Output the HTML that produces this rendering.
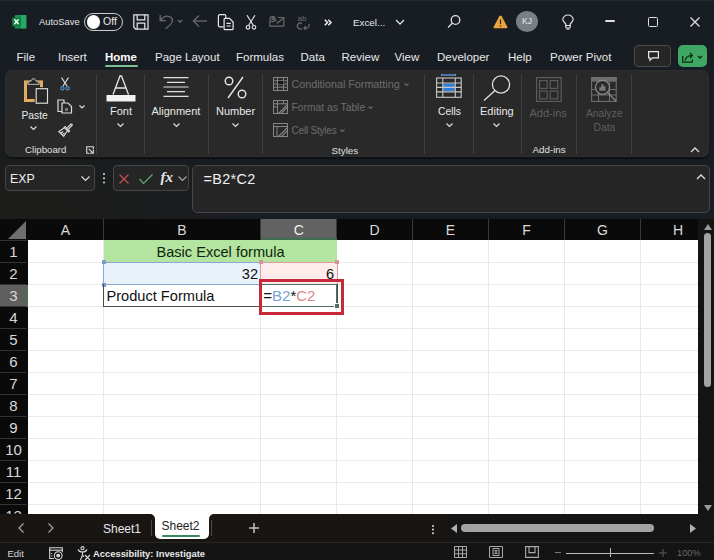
<!DOCTYPE html>
<html><head><meta charset="utf-8">
<style>
*{margin:0;padding:0;box-sizing:border-box}
html,body{width:714px;height:560px;overflow:hidden;background:#181d23;font-family:"Liberation Sans",sans-serif;color:#e6e6e6}
.a{position:absolute;white-space:nowrap}
.t{font-size:11.5px;line-height:14px;color:#e8e8e8}
.rb{font-size:11px;line-height:13px;color:#e8e8e8}
.dim{color:#6d6d6d}
svg{position:absolute;overflow:visible}
.sep{position:absolute;width:1px;background:#3f3f3f;top:74px;height:80px}
.hdr{position:absolute;top:220px;height:20px;background:#0a0a0a;color:#dcdcdc;font-size:14px;line-height:20px;text-align:center}
.rh{position:absolute;left:0;width:27px;height:21px;background:#0a0a0a;color:#d8d8d8;font-size:15px;line-height:22px;text-align:center}
</style></head><body>
<!-- title bar -->
<div class="a" style="left:0;top:0;width:714px;height:219px;background:#181d23;border-top:1px solid #25292e"></div>
<div class="a" style="left:0;top:0;width:714px;height:219px;background:radial-gradient(ellipse 260px 110px at 0px 219px,#1d1e1b 0%,rgba(29,30,27,0.85) 40%,rgba(29,30,27,0) 100%)"></div>
<!-- excel icon -->
<svg style="left:12px;top:14.5px" width="15" height="14" viewBox="0 0 15 14">
 <rect x="2.8" y="0" width="11.5" height="13.5" rx="1" fill="#1b9055"/>
 <rect x="9" y="0" width="5.3" height="13.5" rx="0.8" fill="#28a866"/>
 <rect x="0" y="2.5" width="9" height="9" rx="1" fill="#107a42"/>
 <path d="M2.3 4.3l4.3 5M6.6 4.3l-4.3 5" stroke="#e8fff0" stroke-width="1.5"/>
</svg>
<div class="a" style="left:39px;top:15px;font-size:9.4px;line-height:13px;color:#e4e4e4">AutoSave</div>
<div class="a" style="left:84px;top:12.5px;width:39px;height:18.5px;border:1.7px solid #cdcdcd;border-radius:10px;background:#181d23"></div>
<div class="a" style="left:86.5px;top:15px;width:13.5px;height:13.5px;border-radius:50%;background:#fff"></div>
<div class="a" style="left:103px;top:15px;font-size:10.5px;line-height:13px;color:#e8e8e8">Off</div>
<!-- save -->
<svg style="left:133px;top:14px" width="16" height="16" viewBox="0 0 16 16" fill="none" stroke="#e4e4e4" stroke-width="1.25">
 <path d="M0.8 0.8h14.2v14.2H2.6L0.8 13.2z"/><path d="M4.2 0.8v5h7.6v-5"/><path d="M4.2 15V9h7.6v6"/>
</svg>
<!-- undo -->
<svg style="left:159px;top:14px" width="25" height="16" viewBox="0 0 25 16" fill="none" stroke="#6e6e6e" stroke-width="1.25">
 <path d="M1.2 1v5.5h5.5"/><path d="M1.5 6.3C4 2.2 9 0.8 12 3.5c2.6 2.4 1.8 6.2-5.5 11.2"/><path d="M19 6l2.2 2.2L23.4 6"/>
</svg>
<!-- back arrow -->
<svg style="left:192px;top:14px" width="16" height="14" viewBox="0 0 16 14" fill="none" stroke="#6a6a6a" stroke-width="1.3">
 <path d="M15 7H1.5"/><path d="M7 1.5L1.5 7 7 12.5"/>
</svg>
<!-- copy -->
<svg style="left:217px;top:13.5px" width="18" height="16" viewBox="0 0 18 16" fill="none" stroke="#e8e8e8" stroke-width="1.2">
 <path d="M6.5 12.8H2.6a1.2 1.2 0 0 1-1.2-1.2V1.9A1.2 1.2 0 0 1 2.6 0.7h5a1.2 1.2 0 0 1 1.2 1.2V4"/>
 <path d="M8 4.3h4.5l3.6 3.8v6.7a0.9 0.9 0 0 1-0.9 0.9H8a0.9 0.9 0 0 1-0.9-0.9V5.2A0.9 0.9 0 0 1 8 4.3z"/><path d="M9.5 9.3h4.3M9.5 12h4.3"/>
</svg>
<!-- scissors -->
<svg style="left:245px;top:14.5px" width="12" height="15" viewBox="0 0 12 15" fill="none" stroke="#e8e8e8" stroke-width="1.15">
 <path d="M2 0.3L8.3 10.2M10 0.3L3.7 10.2"/><circle cx="3" cy="12.3" r="1.8"/><circle cx="9" cy="12.3" r="1.8"/>
</svg>
<!-- mail -->
<svg style="left:269px;top:14.5px" width="16" height="12" viewBox="0 0 16 12" fill="none" stroke="#6a6a6a" stroke-width="1.2">
 <path d="M0.8 6v5.2h14V2.5H9"/><path d="M8 8.5L14.5 3"/><path d="M5.8 5.2A2.6 2.6 0 1 1 6 3.3V5.5a1 1 0 0 0 1.6 0"/><circle cx="4" cy="3.5" r="1"/>
</svg>
<!-- abc -->
<svg style="left:296px;top:14px" width="15" height="16" viewBox="0 0 15 16">
 <text x="1.5" y="7" font-size="8" font-family="Liberation Sans" fill="#707070">ab</text>
 <path d="M6 9.5a3 3 0 1 0 0 5" fill="none" stroke="#707070" stroke-width="1.1"/>
 <path d="M13 10v1.5a2.5 2.5 0 0 1-2.5 2.5H8M9.8 12.2L8 14l1.8 1.8" fill="none" stroke="#707070" stroke-width="1.1"/>
</svg>
<svg style="left:323.5px;top:19px" width="8" height="7" viewBox="0 0 8 7" fill="none" stroke="#f0f0f0" stroke-width="1.5"><path d="M0.8 0.8L3.5 3.5 0.8 6.2M4.3 0.8L7 3.5 4.3 6.2"/></svg>
<div class="a" style="left:353px;top:16px;font-size:9.8px;line-height:13px;color:#e8e8e8">Excel...</div>
<svg style="left:395px;top:19px" width="10" height="6" viewBox="0 0 10 6" fill="none" stroke="#e0e0e0" stroke-width="1.3"><path d="M1 1l4 4 4-4"/></svg>
<!-- search -->
<svg style="left:447px;top:15px" width="14" height="13" viewBox="0 0 14 13" fill="none" stroke="#e0e0e0" stroke-width="1.3">
 <circle cx="8.5" cy="5" r="4.3"/><path d="M5.5 8L1 12.5"/>
</svg>
<!-- warning -->
<svg style="left:493px;top:14.5px" width="15" height="14" viewBox="0 0 15 14">
 <path d="M6.3 1.3Q7.5 -0.5 8.7 1.3L14.3 11.8Q15 13.3 13.4 13.3H1.6Q0 13.3 0.7 11.8z" fill="#eba53f"/><path d="M7.5 4.5v4.5" stroke="#3a2a10" stroke-width="1.3"/><circle cx="7.5" cy="11" r="0.75" fill="#3a2a10"/>
</svg>
<div class="a" style="left:516px;top:11.3px;width:22px;height:21px;border-radius:50%;background:#798084;color:#e8e8e8;font-size:8.5px;line-height:21px;text-align:center">KJ</div>
<!-- bulb -->
<svg style="left:562px;top:14.5px" width="12" height="15" viewBox="0 0 12 15" fill="none" stroke="#e0e0e0" stroke-width="1.2">
 <path d="M3.8 10.5V9.5C3.8 8 0.8 6.8 0.8 4.6a5.2 4.6 0 0 1 10.4 0c0 2.2-3 3.4-3 4.9v1z"/><path d="M3.8 10.5h4.4v1.5a1 1 0 0 1-1 1H4.8a1 1 0 0 1-1-1z"/><path d="M4.5 14h3"/>
</svg>
<div class="a" style="left:605px;top:20.2px;width:9.5px;height:1.7px;background:#e0e0e0;border-radius:1px"></div>
<div class="a" style="left:648px;top:17px;width:9.5px;height:9.5px;border:1.3px solid #e0e0e0;border-radius:1.5px"></div>
<svg style="left:690px;top:17px" width="10" height="10" viewBox="0 0 10 10" fill="none" stroke="#e0e0e0" stroke-width="1.3"><path d="M0.5 0.5l9 9M9.5 0.5l-9 9"/></svg>

<!-- tabs -->
<div class="a t" style="left:16.5px;top:50px">File</div>
<div class="a t" style="left:58px;top:50px">Insert</div>
<div class="a t" style="left:105px;top:50px;font-weight:bold;color:#fff">Home</div>
<div class="a" style="left:105px;top:64.5px;width:33px;height:2px;background:#7dbd92;border-radius:1px"></div>
<div class="a t" style="left:155px;top:50px">Page Layout</div>
<div class="a t" style="left:236px;top:50px">Formulas</div>
<div class="a t" style="left:300.5px;top:50px">Data</div>
<div class="a t" style="left:341.5px;top:50px">Review</div>
<div class="a t" style="left:394.5px;top:50px">View</div>
<div class="a t" style="left:437px;top:50px">Developer</div>
<div class="a t" style="left:508px;top:50px">Help</div>
<div class="a t" style="left:550px;top:50px">Power Pivot</div>
<div class="a" style="left:634px;top:45px;width:37px;height:22px;border:1px solid #4a4a4a;border-radius:4px;background:#262626"></div>
<svg style="left:647.5px;top:51px" width="11" height="10" viewBox="0 0 11 10" fill="none" stroke="#e8e8e8" stroke-width="1.2"><path d="M0.6 0.6h9.8v6.2H4.5L2 9.3V6.8H0.6z"/></svg>
<div class="a" style="left:677.5px;top:45px;width:29px;height:22px;border-radius:5px;background:#3fa763"></div>
<svg style="left:681.5px;top:50.5px" width="21" height="12" viewBox="0 0 21 12" fill="none" stroke="#0c2a15" stroke-width="1.25"><path d="M0.7 5v6h9.6V8.5"/><path d="M3.2 9.5C3.6 6.2 6 4.5 10 4.5"/><path d="M8 2l2.4 2.5L8 7"/><path d="M16 5l2 2 2-2"/></svg>

<!-- ribbon -->
<div class="a" style="left:5px;top:70px;width:704px;height:87px;background:#292929;border-radius:7px;box-shadow:inset 0 0 0 1px #2e2e2e,0 1.5px 1.5px rgba(0,0,0,0.45)"></div>
<!-- paste -->
<svg style="left:22px;top:76px" width="28" height="30" viewBox="0 0 28 30">
 <rect x="3.5" y="5.9" width="16" height="18.6" fill="none" stroke="#e2ac5e" stroke-width="3"/>
 <path d="M6.2 8.3V6.2Q8.5 5.8 9.6 4.2Q11.5 1.2 13.4 4.2Q14.5 5.8 16.8 6.2V8.3z" fill="#222" stroke="#a0a0a0" stroke-width="1.2"/>
 <rect x="14.2" y="12.7" width="11.3" height="14.5" fill="#262626" stroke="#222" stroke-width="3"/>
 <rect x="14.2" y="12.7" width="11.3" height="14.5" fill="none" stroke="#dcdcdc" stroke-width="1.2"/>
</svg>
<div class="a rb" style="left:21.5px;top:108.5px;font-size:10.3px">Paste</div>
<svg style="left:30px;top:126px" width="7" height="4" viewBox="0 0 7 4" fill="none" stroke="#ddd" stroke-width="1.2"><path d="M0.5 0.5l3 3 3-3"/></svg>
<svg style="left:60px;top:77px" width="10" height="14" viewBox="0 0 10 14" fill="none" stroke-width="1.2">
 <path d="M1.5 0.5L7 9M8.5 0.5L3 9" stroke="#dcdcdc"/><circle cx="2.4" cy="11.2" r="1.6" stroke="#4f8fcc"/><circle cx="7.6" cy="11.2" r="1.6" stroke="#4f8fcc"/>
</svg>
<svg style="left:57px;top:99px" width="16" height="15" viewBox="0 0 16 15" fill="none" stroke="#dcdcdc" stroke-width="1.2">
 <path d="M5 12.5H1V1h6v3"/><path d="M5 4h6l3.5 3.5V14H5z"/><rect x="8" y="9" width="3" height="3" fill="#777" stroke="none"/>
</svg>
<svg style="left:78.5px;top:105px" width="6" height="4" viewBox="0 0 6 4" fill="none" stroke="#ddd" stroke-width="1.2"><path d="M0.5 0.5l2.5 2.5 2.5-2.5"/></svg>
<svg style="left:58px;top:122px" width="15" height="15" viewBox="0 0 15 15" fill="none" stroke="#dcdcdc" stroke-width="1.15">
 <path d="M9.3 5.7L13 2a1 1 0 0 1 1.2 1.2L10.5 7"/><path d="M7.2 4.6l4.4 4.4-1 1L6.2 5.6z"/><path d="M6.4 5.8L0.8 9.5 5.7 14.4 9.4 8.8"/><path d="M2.6 11.3l2.5-1.8M4.2 12.9l2.3-2"/>
</svg>
<div class="a" style="left:25px;top:142.5px;font-size:9.7px;line-height:13px;color:#e0e0e0">Clipboard</div>
<svg style="left:85.5px;top:146px" width="8" height="8" viewBox="0 0 8 8" fill="none" stroke="#ddd" stroke-width="1.1"><path d="M7.3 3.5V0.7H0.7v6.6h2.8"/><path d="M2.8 2.8l4.3 4.3M7.3 4v3.3H4"/></svg>
<div class="sep" style="left:96px"></div>
<!-- font -->
<svg style="left:106px;top:75px" width="30" height="27" viewBox="0 0 30 27">
 <path d="M7 19.5L14 1h1.5l7 18.5M9.5 13h10" fill="none" stroke="#e6e6e6" stroke-width="1.3"/>
 <rect x="0.5" y="20" width="29" height="6.5" fill="#f2f2f2"/>
</svg>
<div class="a rb" style="left:110px;top:105px">Font</div>
<svg style="left:117px;top:123px" width="7" height="4" viewBox="0 0 7 4" fill="none" stroke="#ddd" stroke-width="1.2"><path d="M0.5 0.5l3 3 3-3"/></svg>
<div class="sep" style="left:144px"></div>
<!-- alignment -->
<svg style="left:163px;top:77px" width="26" height="21" viewBox="0 0 26 21" fill="none" stroke="#e0e0e0" stroke-width="1.2">
 <path d="M0.5 0.6h25M4 5.3h18M0.5 10h25M4 14.7h18M0.5 19.4h25"/>
</svg>
<div class="a rb" style="left:151.5px;top:105px">Alignment</div>
<svg style="left:172.5px;top:123px" width="7" height="4" viewBox="0 0 7 4" fill="none" stroke="#ddd" stroke-width="1.2"><path d="M0.5 0.5l3 3 3-3"/></svg>
<div class="sep" style="left:208px"></div>
<!-- number -->
<svg style="left:224px;top:76px" width="23" height="23" viewBox="0 0 23 23" fill="none" stroke="#e6e6e6" stroke-width="1.4">
 <circle cx="5" cy="5" r="3.8"/><circle cx="18" cy="18" r="3.8"/><path d="M19 1L4 22"/>
</svg>
<div class="a rb" style="left:216px;top:105px">Number</div>
<svg style="left:232px;top:123px" width="7" height="4" viewBox="0 0 7 4" fill="none" stroke="#ddd" stroke-width="1.2"><path d="M0.5 0.5l3 3 3-3"/></svg>
<div class="sep" style="left:262px"></div>
<!-- styles -->
<svg style="left:273px;top:77px" width="15" height="60" viewBox="0 0 15 60" fill="none" stroke="#858585" stroke-width="1">
 <rect x="0.5" y="0.5" width="14" height="13"/><path d="M0.5 3.8h14M0.5 7h14M0.5 10.2h14M4.5 0.5v13M10.5 0.5v13"/><rect x="5" y="4" width="5.5" height="3" fill="#1a1a1a" stroke="none"/>
 <g transform="translate(0,23)"><rect x="0.5" y="0.5" width="14" height="13"/><path d="M0.5 3.8h14M0.5 7h4M4.5 0.5v13M10.5 0.5v3.3"/><path d="M5.5 13.5L14.5 4.5M8 13.5l6.5-6.5" stroke-width="1.1"/></g>
 <g transform="translate(0,46)"><rect x="0.5" y="0.5" width="14" height="13"/><path d="M0.5 3.5h14M4 3.5v10"/><path d="M5.5 13.5L14.5 4.5M8.5 13.5l6-6" stroke-width="1.1"/></g>
</svg>
<div class="a rb dim" style="left:291.5px;top:78px;font-size:10.75px">Conditional Formatting</div>
<svg style="left:404px;top:83px" width="5" height="3" viewBox="0 0 5 3" fill="none" stroke="#6a6a6a" stroke-width="1.1"><path d="M0.5 0.5l2 2 2-2"/></svg>
<div class="a rb dim" style="left:291.5px;top:101px;font-size:10.3px">Format as Table</div>
<svg style="left:368px;top:106px" width="5" height="3" viewBox="0 0 5 3" fill="none" stroke="#6a6a6a" stroke-width="1.1"><path d="M0.5 0.5l2 2 2-2"/></svg>
<div class="a rb dim" style="left:291.5px;top:124px;font-size:10px;letter-spacing:-0.2px">Cell Styles</div>
<svg style="left:340px;top:129px" width="5" height="3" viewBox="0 0 5 3" fill="none" stroke="#6a6a6a" stroke-width="1.1"><path d="M0.5 0.5l2 2 2-2"/></svg>
<div class="a" style="left:331.5px;top:143.5px;font-size:9.8px;line-height:13px;color:#e0e0e0">Styles</div>
<div class="sep" style="left:424px"></div>
<!-- ribbon-cells -->
<svg style="left:436px;top:73px" width="26" height="25" viewBox="0 0 26 25" fill="none" stroke="#c8c8c8" stroke-width="1.1">
 <path d="M5.5 2h14" stroke="#5b8fd0" stroke-width="1.5"/><path d="M5.5 0.8v2.4M19.5 0.8v2.4" stroke="#5b8fd0" stroke-width="1"/>
 <rect x="7" y="10.5" width="12" height="7.5" fill="#2f7fd8" stroke="none"/>
 <rect x="0.6" y="5" width="24.6" height="19.3"/><path d="M0.6 10h24.6M0.6 14.4h24.6M0.6 18.9h24.6M6.8 5v19.3M19.3 5v19.3"/>
</svg>
<div class="a rb" style="left:438px;top:105px;font-size:10.3px">Cells</div>
<svg style="left:445.5px;top:123px" width="7" height="4" viewBox="0 0 7 4" fill="none" stroke="#ddd" stroke-width="1.2"><path d="M0.5 0.5l3 3 3-3"/></svg>
<div class="sep" style="left:473px"></div>
<!-- editing -->
<svg style="left:483px;top:75px" width="28" height="26" viewBox="0 0 28 26" fill="none" stroke="#e0e0e0" stroke-width="1.3">
 <circle cx="18" cy="9.5" r="8.6"/><path d="M12 15.5L1 25.5"/>
</svg>
<div class="a rb" style="left:480px;top:105px">Editing</div>
<svg style="left:492.5px;top:123px" width="7" height="4" viewBox="0 0 7 4" fill="none" stroke="#ddd" stroke-width="1.2"><path d="M0.5 0.5l3 3 3-3"/></svg>
<div class="sep" style="left:521px"></div>
<!-- addins -->
<svg style="left:536px;top:77px" width="26" height="25" viewBox="0 0 26 25" fill="none" stroke="#5c5c5c" stroke-width="1.2">
 <rect x="0.6" y="0.6" width="24.6" height="23.8"/><rect x="3.6" y="3.6" width="7.6" height="7.8"/><rect x="14.2" y="3.6" width="7.6" height="7.8"/><rect x="3.6" y="14" width="7.6" height="7.8"/><rect x="14.2" y="14" width="7.6" height="7.8"/>
</svg>
<div class="a rb dim" style="left:529.5px;top:106.5px;color:#5f5f5f">Add-ins</div>
<div class="a" style="left:532.5px;top:143px;font-size:9.8px;line-height:13px;color:#e0e0e0">Add-ins</div>
<div class="sep" style="left:576px"></div>
<!-- analyze -->
<svg style="left:591px;top:77px" width="27" height="26" viewBox="0 0 27 26" fill="none" stroke="#6e6e6e" stroke-width="1.1">
 <rect x="0.6" y="0.6" width="24.6" height="23.8"/><rect x="0.6" y="0.6" width="24.6" height="3.5" fill="#6e6e6e"/>
 <path d="M0.6 12.5h24.6M0.6 18h24.6M7.5 4v20.4M18.5 4v20.4"/>
 <circle cx="11.5" cy="10.3" r="7" fill="#292929" stroke="#8c8c8c" stroke-width="1.3"/><path d="M16.5 15.5l8.5 8.5" stroke="#8c8c8c" stroke-width="1.3"/>
 <path d="M8.3 13.8v-3.5h2v3.5M10.3 13.8V7.3h2.2v6.5M12.5 13.8v-4.5h2v4.5" fill="#7a7a7a" stroke="none"/>
</svg>
<div class="a rb dim" style="left:586px;top:106.5px;color:#5f5f5f;font-size:10.3px">Analyze</div>
<div class="a rb dim" style="left:593.5px;top:120.5px;color:#5f5f5f;font-size:10.3px">Data</div>
<div class="sep" style="left:631px"></div>
<svg style="left:690px;top:146.5px" width="10" height="6" viewBox="0 0 10 6" fill="none" stroke="#ddd" stroke-width="1.3"><path d="M1 5l4-4 4 4"/></svg>

<!-- formula bar -->
<div class="a" style="left:5px;top:165px;width:90px;height:25.5px;border:1px solid #454545;border-radius:4px;background:#252525"></div>
<div class="a" style="left:10px;top:171.5px;font-size:12.3px;line-height:15px;color:#f0f0f0">EXP</div>
<svg style="left:81px;top:175.5px" width="9" height="5" viewBox="0 0 9 5" fill="none" stroke="#ddd" stroke-width="1.2"><path d="M0.5 0.5l4 4 4-4"/></svg>
<div class="a" style="left:102.5px;top:173px;width:2px;height:2px;background:#ddd;border-radius:1px;box-shadow:0 4.3px 0 #ddd,0 8.6px 0 #ddd"></div>
<div class="a" style="left:113px;top:165px;width:75.5px;height:25.5px;border:1px solid #454545;border-radius:4px;background:#252525"></div>
<svg style="left:119px;top:173.5px" width="10" height="10" viewBox="0 0 10 10" fill="none" stroke="#c94f55" stroke-width="1.1"><path d="M0.5 0.5l9 9M9.5 0.5l-9 9"/></svg>
<svg style="left:138.5px;top:173.5px" width="14" height="10" viewBox="0 0 14 10" fill="none" stroke="#5daf72" stroke-width="1.2"><path d="M0.5 5l4 4.5 9-9"/></svg>
<div class="a" style="left:160.5px;top:169px;font-family:'Liberation Serif',serif;font-style:italic;font-weight:bold;font-size:15px;line-height:17px;color:#e6e6e6">fx</div>
<svg style="left:178px;top:175.5px" width="9" height="5" viewBox="0 0 9 5" fill="none" stroke="#a8a8a8" stroke-width="1.1"><path d="M0.5 0.5l4 4 4-4"/></svg>
<div class="a" style="left:192px;top:165px;width:518px;height:47.5px;border:1px solid #454545;border-radius:5px;background:#262626"></div>
<div class="a" style="left:203.5px;top:170.5px;font-size:14.4px;line-height:17px;letter-spacing:0.35px;color:#f0f0f0">=B2*C2</div>
<svg style="left:696px;top:174px" width="10" height="6" viewBox="0 0 10 6" fill="none" stroke="#ddd" stroke-width="1.3"><path d="M1 5l4-4 4 4"/></svg>

<!-- column headers -->
<div class="a" style="left:0;top:219px;width:698px;height:21px;background:#0a0a0a"></div>
<svg style="left:8px;top:221px" width="18" height="18" viewBox="0 0 18 18"><path d="M18 0V18H0z" fill="#6e6e6e"/></svg>
<div class="hdr" style="left:28px;width:75px">A</div>
<div class="hdr" style="left:104px;width:156px">B</div>
<div class="hdr" style="left:260.5px;width:76.5px;top:219px;height:21px;line-height:22px;background:#626262;color:#f0f0f0">C</div>
<div class="hdr" style="left:337px;width:75px">D</div>
<div class="hdr" style="left:413px;width:75px">E</div>
<div class="hdr" style="left:489px;width:75px">F</div>
<div class="hdr" style="left:565px;width:75px">G</div>
<div class="hdr" style="left:641px;width:57px;text-align:right;padding-right:15px">H</div>

<!-- grid -->
<div class="a" style="left:28px;top:240px;width:670px;height:274px;background:#fff"></div>
<div class="a" style="left:0;top:240px;width:27.5px;height:274px;background:#0a0a0a"></div>
<div class="a" style="left:103px;top:240px;width:1px;height:274px;background:#e9e9e9"></div>
<div class="a" style="left:260px;top:240px;width:1px;height:274px;background:#e9e9e9"></div>
<div class="a" style="left:336px;top:240px;width:1px;height:274px;background:#e9e9e9"></div>
<div class="a" style="left:412px;top:240px;width:1px;height:274px;background:#e9e9e9"></div>
<div class="a" style="left:488px;top:240px;width:1px;height:274px;background:#e9e9e9"></div>
<div class="a" style="left:564px;top:240px;width:1px;height:274px;background:#e9e9e9"></div>
<div class="a" style="left:640px;top:240px;width:1px;height:274px;background:#e9e9e9"></div>
<div class="a" style="left:28px;top:262px;width:670px;height:1px;background:#e9e9e9"></div>
<div class="a" style="left:28px;top:284px;width:670px;height:1px;background:#e9e9e9"></div>
<div class="a" style="left:28px;top:306px;width:670px;height:1px;background:#e9e9e9"></div>
<div class="a" style="left:28px;top:328px;width:670px;height:1px;background:#e9e9e9"></div>
<div class="a" style="left:28px;top:350px;width:670px;height:1px;background:#e9e9e9"></div>
<div class="a" style="left:28px;top:372px;width:670px;height:1px;background:#e9e9e9"></div>
<div class="a" style="left:28px;top:394px;width:670px;height:1px;background:#e9e9e9"></div>
<div class="a" style="left:28px;top:416px;width:670px;height:1px;background:#e9e9e9"></div>
<div class="a" style="left:28px;top:438px;width:670px;height:1px;background:#e9e9e9"></div>
<div class="a" style="left:28px;top:460px;width:670px;height:1px;background:#e9e9e9"></div>
<div class="a" style="left:28px;top:482px;width:670px;height:1px;background:#e9e9e9"></div>
<div class="a" style="left:28px;top:504px;width:670px;height:1px;background:#e9e9e9"></div>
<div class="rh" style="top:241px;background:#0a0a0a">1</div>
<div class="a" style="left:0;top:240px;width:27px;height:1px;background:#333"></div>
<div class="rh" style="top:263px;background:#0a0a0a">2</div>
<div class="a" style="left:0;top:262px;width:27px;height:1px;background:#333"></div>
<div class="rh" style="top:285px;background:#5f5f5f">3</div>
<div class="a" style="left:0;top:284px;width:27px;height:1px;background:#333"></div>
<div class="rh" style="top:307px;background:#0a0a0a">4</div>
<div class="a" style="left:0;top:306px;width:27px;height:1px;background:#333"></div>
<div class="rh" style="top:329px;background:#0a0a0a">5</div>
<div class="a" style="left:0;top:328px;width:27px;height:1px;background:#333"></div>
<div class="rh" style="top:351px;background:#0a0a0a">6</div>
<div class="a" style="left:0;top:350px;width:27px;height:1px;background:#333"></div>
<div class="rh" style="top:373px;background:#0a0a0a">7</div>
<div class="a" style="left:0;top:372px;width:27px;height:1px;background:#333"></div>
<div class="rh" style="top:395px;background:#0a0a0a">8</div>
<div class="a" style="left:0;top:394px;width:27px;height:1px;background:#333"></div>
<div class="rh" style="top:417px;background:#0a0a0a">9</div>
<div class="a" style="left:0;top:416px;width:27px;height:1px;background:#333"></div>
<div class="rh" style="top:439px;background:#0a0a0a">10</div>
<div class="a" style="left:0;top:438px;width:27px;height:1px;background:#333"></div>
<div class="rh" style="top:461px;background:#0a0a0a">11</div>
<div class="a" style="left:0;top:460px;width:27px;height:1px;background:#333"></div>
<div class="rh" style="top:483px;background:#0a0a0a">12</div>
<div class="a" style="left:0;top:482px;width:27px;height:1px;background:#333"></div>
<div class="rh" style="top:505px;background:#0a0a0a">13</div>
<div class="a" style="left:0;top:504px;width:27px;height:1px;background:#333"></div>
<div class="a" style="left:103px;top:219px;width:1px;height:21px;background:#3a3a3a"></div>
<div class="a" style="left:260px;top:219px;width:1px;height:21px;background:#3a3a3a"></div>
<div class="a" style="left:336px;top:219px;width:1px;height:21px;background:#3a3a3a"></div>
<div class="a" style="left:412px;top:219px;width:1px;height:21px;background:#3a3a3a"></div>
<div class="a" style="left:488px;top:219px;width:1px;height:21px;background:#3a3a3a"></div>
<div class="a" style="left:564px;top:219px;width:1px;height:21px;background:#3a3a3a"></div>
<div class="a" style="left:640px;top:219px;width:1px;height:21px;background:#3a3a3a"></div>
<div class="a" style="left:260.5px;top:238px;width:76.5px;height:2px;background:#3f6e4e"></div>
<div class="a" style="left:26px;top:284.5px;width:1.5px;height:22px;background:#4a6e58"></div>
<!-- cells -->
<div class="a" style="left:104px;top:240px;width:233px;height:22px;background:#b3e4a0"></div>
<div class="a" style="left:104px;top:243px;width:233px;font-size:14.6px;line-height:18px;text-align:center;color:#0f1f0a">Basic Excel formula</div>
<div class="a" style="left:104px;top:263px;width:156px;height:21px;background:#e9f1fb"></div>
<div class="a" style="left:261px;top:263px;width:76px;height:21px;background:#fdeceb"></div>
<div class="a" style="left:104px;top:265px;width:154px;font-size:14.6px;line-height:18px;text-align:right;color:#111">32</div>
<div class="a" style="left:261px;top:265px;width:73px;font-size:14.6px;line-height:18px;text-align:right;color:#111">6</div>
<div class="a" style="left:103px;top:261.5px;width:158px;height:23.5px;border:1.5px solid #8aa6d4"></div>
<div class="a" style="left:260px;top:261.5px;width:77.5px;height:23.5px;border:1.5px solid #dc9c9c"></div>
<div class="a" style="left:101.5px;top:260px;width:4px;height:4px;background:#7f9ccc"></div>
<div class="a" style="left:101.5px;top:282.5px;width:4px;height:4px;background:#7f9ccc"></div>
<div class="a" style="left:258.5px;top:260px;width:4px;height:4px;background:#d39595"></div>
<div class="a" style="left:334.7px;top:260px;width:4px;height:4px;background:#d39595"></div>
<div class="a" style="left:103px;top:284px;width:235px;height:23px;border:1px solid #4a4a4a;border-top:none"></div>
<div class="a" style="left:106.5px;top:287px;font-size:14.6px;line-height:18px;color:#111">Product Formula</div>
<div class="a" style="left:261px;top:283.5px;width:76px;height:1.5px;background:#4f705e"></div>
<div class="a" style="left:261px;top:305.5px;width:76px;height:1.5px;background:#4f705e"></div>
<div class="a" style="left:335.5px;top:283.5px;width:1.5px;height:23px;background:#4f705e"></div>
<div class="a" style="left:334.5px;top:303.5px;width:4px;height:4px;background:#4f705e;outline:1px solid #fff"></div>
<div class="a" style="left:263.3px;top:286px;font-size:15px;line-height:19px;color:#111">=<span style="color:#7aa0d8">B2</span>*<span style="color:#d98888">C2</span></div>
<div class="a" style="left:259px;top:279px;width:85px;height:36px;border:3.5px solid #c8283a"></div>

<!-- right scroll area -->
<div class="a" style="left:698px;top:219px;width:16px;height:324px;background:#141414"></div>
<svg style="left:704px;top:223.5px" width="8" height="6" viewBox="0 0 8 6"><path d="M4 0L8 6H0z" fill="#9a9a9a"/></svg>
<div class="a" style="left:704px;top:233px;width:7px;height:154px;border-radius:4px;background:#a3a3a3"></div>
<svg style="left:704px;top:505px" width="8" height="6" viewBox="0 0 8 6"><path d="M0 0H8L4 6z" fill="#9a9a9a"/></svg>

<!-- sheet tab bar -->
<div class="a" style="left:0;top:514px;width:714px;height:29px;background:#181512"></div>
<div class="a" style="left:148px;top:514px;width:67px;height:20px;background:#fff"></div>
<div class="a" style="left:154.5px;top:514px;width:54px;height:25px;background:#fff;border-radius:0 0 5px 5px"></div>
<div class="a" style="left:0;top:514px;width:154.5px;height:29px;background:#181512;border-top-right-radius:5px"></div>
<div class="a" style="left:208.5px;top:514px;width:505.5px;height:29px;background:#181512;border-top-left-radius:5px"></div>
<div class="a" style="left:447px;top:514px;width:267px;height:28px;background:#151515"></div>
<svg style="left:18px;top:523px" width="6" height="10" viewBox="0 0 6 10" fill="none" stroke="#a8a8a8" stroke-width="1.2"><path d="M5.5 0.5L1 5l4.5 4.5"/></svg>
<svg style="left:47.5px;top:523px" width="6" height="10" viewBox="0 0 6 10" fill="none" stroke="#a8a8a8" stroke-width="1.2"><path d="M0.5 0.5L5 5 0.5 9.5"/></svg>
<div class="a" style="left:103px;top:522px;font-size:12px;line-height:14px;color:#e8e8e8">Sheet1</div>
<div class="a" style="left:151px;top:520px;width:1px;height:16px;background:#4a4a4a"></div>
<div class="a" style="left:161.5px;top:519px;font-size:12px;line-height:14px;color:#222">Sheet2</div>
<div class="a" style="left:162px;top:534.5px;width:38px;height:2px;background:#3a8a60;border-radius:1px"></div>
<div class="a" style="left:211px;top:520px;width:1px;height:16px;background:#4a4a4a"></div>
<svg style="left:249px;top:522.5px" width="10" height="10" viewBox="0 0 10 10" fill="none" stroke="#c4c4c4" stroke-width="1.5"><path d="M5 0v10M0 5h10"/></svg>
<div class="a" style="left:431.5px;top:524.5px;width:2px;height:2px;background:#ddd;border-radius:1px;box-shadow:0 3.6px 0 #ddd,0 7.2px 0 #ddd"></div>
<svg style="left:451px;top:524px" width="6" height="9" viewBox="0 0 6 9"><path d="M6 0V9L0 4.5z" fill="#b0b0b0"/></svg>
<div class="a" style="left:461px;top:524px;width:193px;height:8px;border-radius:4px;background:#a3a3a3"></div>
<svg style="left:689.5px;top:523.5px" width="6" height="9" viewBox="0 0 6 9"><path d="M0 0V9L6 4.5z" fill="#b0b0b0"/></svg>

<!-- status bar -->
<div class="a" style="left:0;top:542px;width:714px;height:18px;background:#141414"></div>
<div class="a" style="left:0;top:541.5px;width:714px;height:1.5px;background:#2a2622"></div>
<div class="a" style="left:7.5px;top:546.5px;font-size:9.5px;line-height:13px;color:#d8d8d8">Edit</div>
<svg style="left:49px;top:546.5px" width="15" height="14" viewBox="0 0 15 14" fill="none" stroke="#d8d8d8" stroke-width="1.1">
 <path d="M5 11.5H0.7V0.7h12.6v4.5"/><path d="M0.7 3.2h12.6"/><path d="M2.7 6v1M2.7 8.5v1"/><circle cx="9.2" cy="8.6" r="3.9"/><circle cx="9.2" cy="8.6" r="1.4" fill="#d8d8d8"/>
</svg>
<svg style="left:77px;top:546px" width="14" height="14" viewBox="0 0 14 14" fill="none" stroke="#d8d8d8" stroke-width="1.1">
 <circle cx="5.5" cy="2.2" r="1.6"/><path d="M1 3.5Q2 6 5.5 6T10 3.5"/><path d="M5.5 6v3L3.5 14M5.5 9l1.5 2"/><path d="M8 9l5 5M13 9l-5 5"/>
</svg>
<div class="a" style="left:93px;top:546.5px;font-size:9.4px;line-height:13px;color:#e8e8e8;font-weight:bold">Accessibility: Investigate</div>
<svg style="left:453.5px;top:546px" width="13" height="12" viewBox="0 0 13 12" fill="none" stroke="#aaa" stroke-width="1"><path d="M0.5 0.5h12v11H.5zM0.5 4h12M0.5 7.8h12M4.5 0.5v11M8.5 0.5v11"/></svg>
<svg style="left:489px;top:546px" width="14" height="12" viewBox="0 0 14 12" fill="none" stroke="#aaa" stroke-width="1"><path d="M0.5 0.5h13v11H.5zM4 2.5h6v7H4zM5.5 4.5h3M5.5 6h3M5.5 7.5h3"/></svg>
<svg style="left:525px;top:546px" width="14" height="12" viewBox="0 0 14 12" fill="none" stroke="#aaa" stroke-width="1.1"><path d="M0.6 0.6h12.8v10.8H0.6z"/><path d="M4 0.6v6h6v-6"/></svg>
<div class="a" style="left:554.5px;top:552px;width:6px;height:1px;background:#777"></div>
<div class="a" style="left:566px;top:552.5px;width:88px;height:1px;background:#bbb"></div>
<div class="a" style="left:609.5px;top:548px;width:1.5px;height:9px;background:#bbb"></div>
<svg style="left:658.5px;top:549px" width="8" height="8" viewBox="0 0 8 8" fill="none" stroke="#5c5c5c" stroke-width="1"><path d="M4 0v8M0 4h8"/></svg>
<div class="a" style="left:677px;top:547px;font-size:9.3px;line-height:13px;color:#686868">100%</div>

</body></html>
